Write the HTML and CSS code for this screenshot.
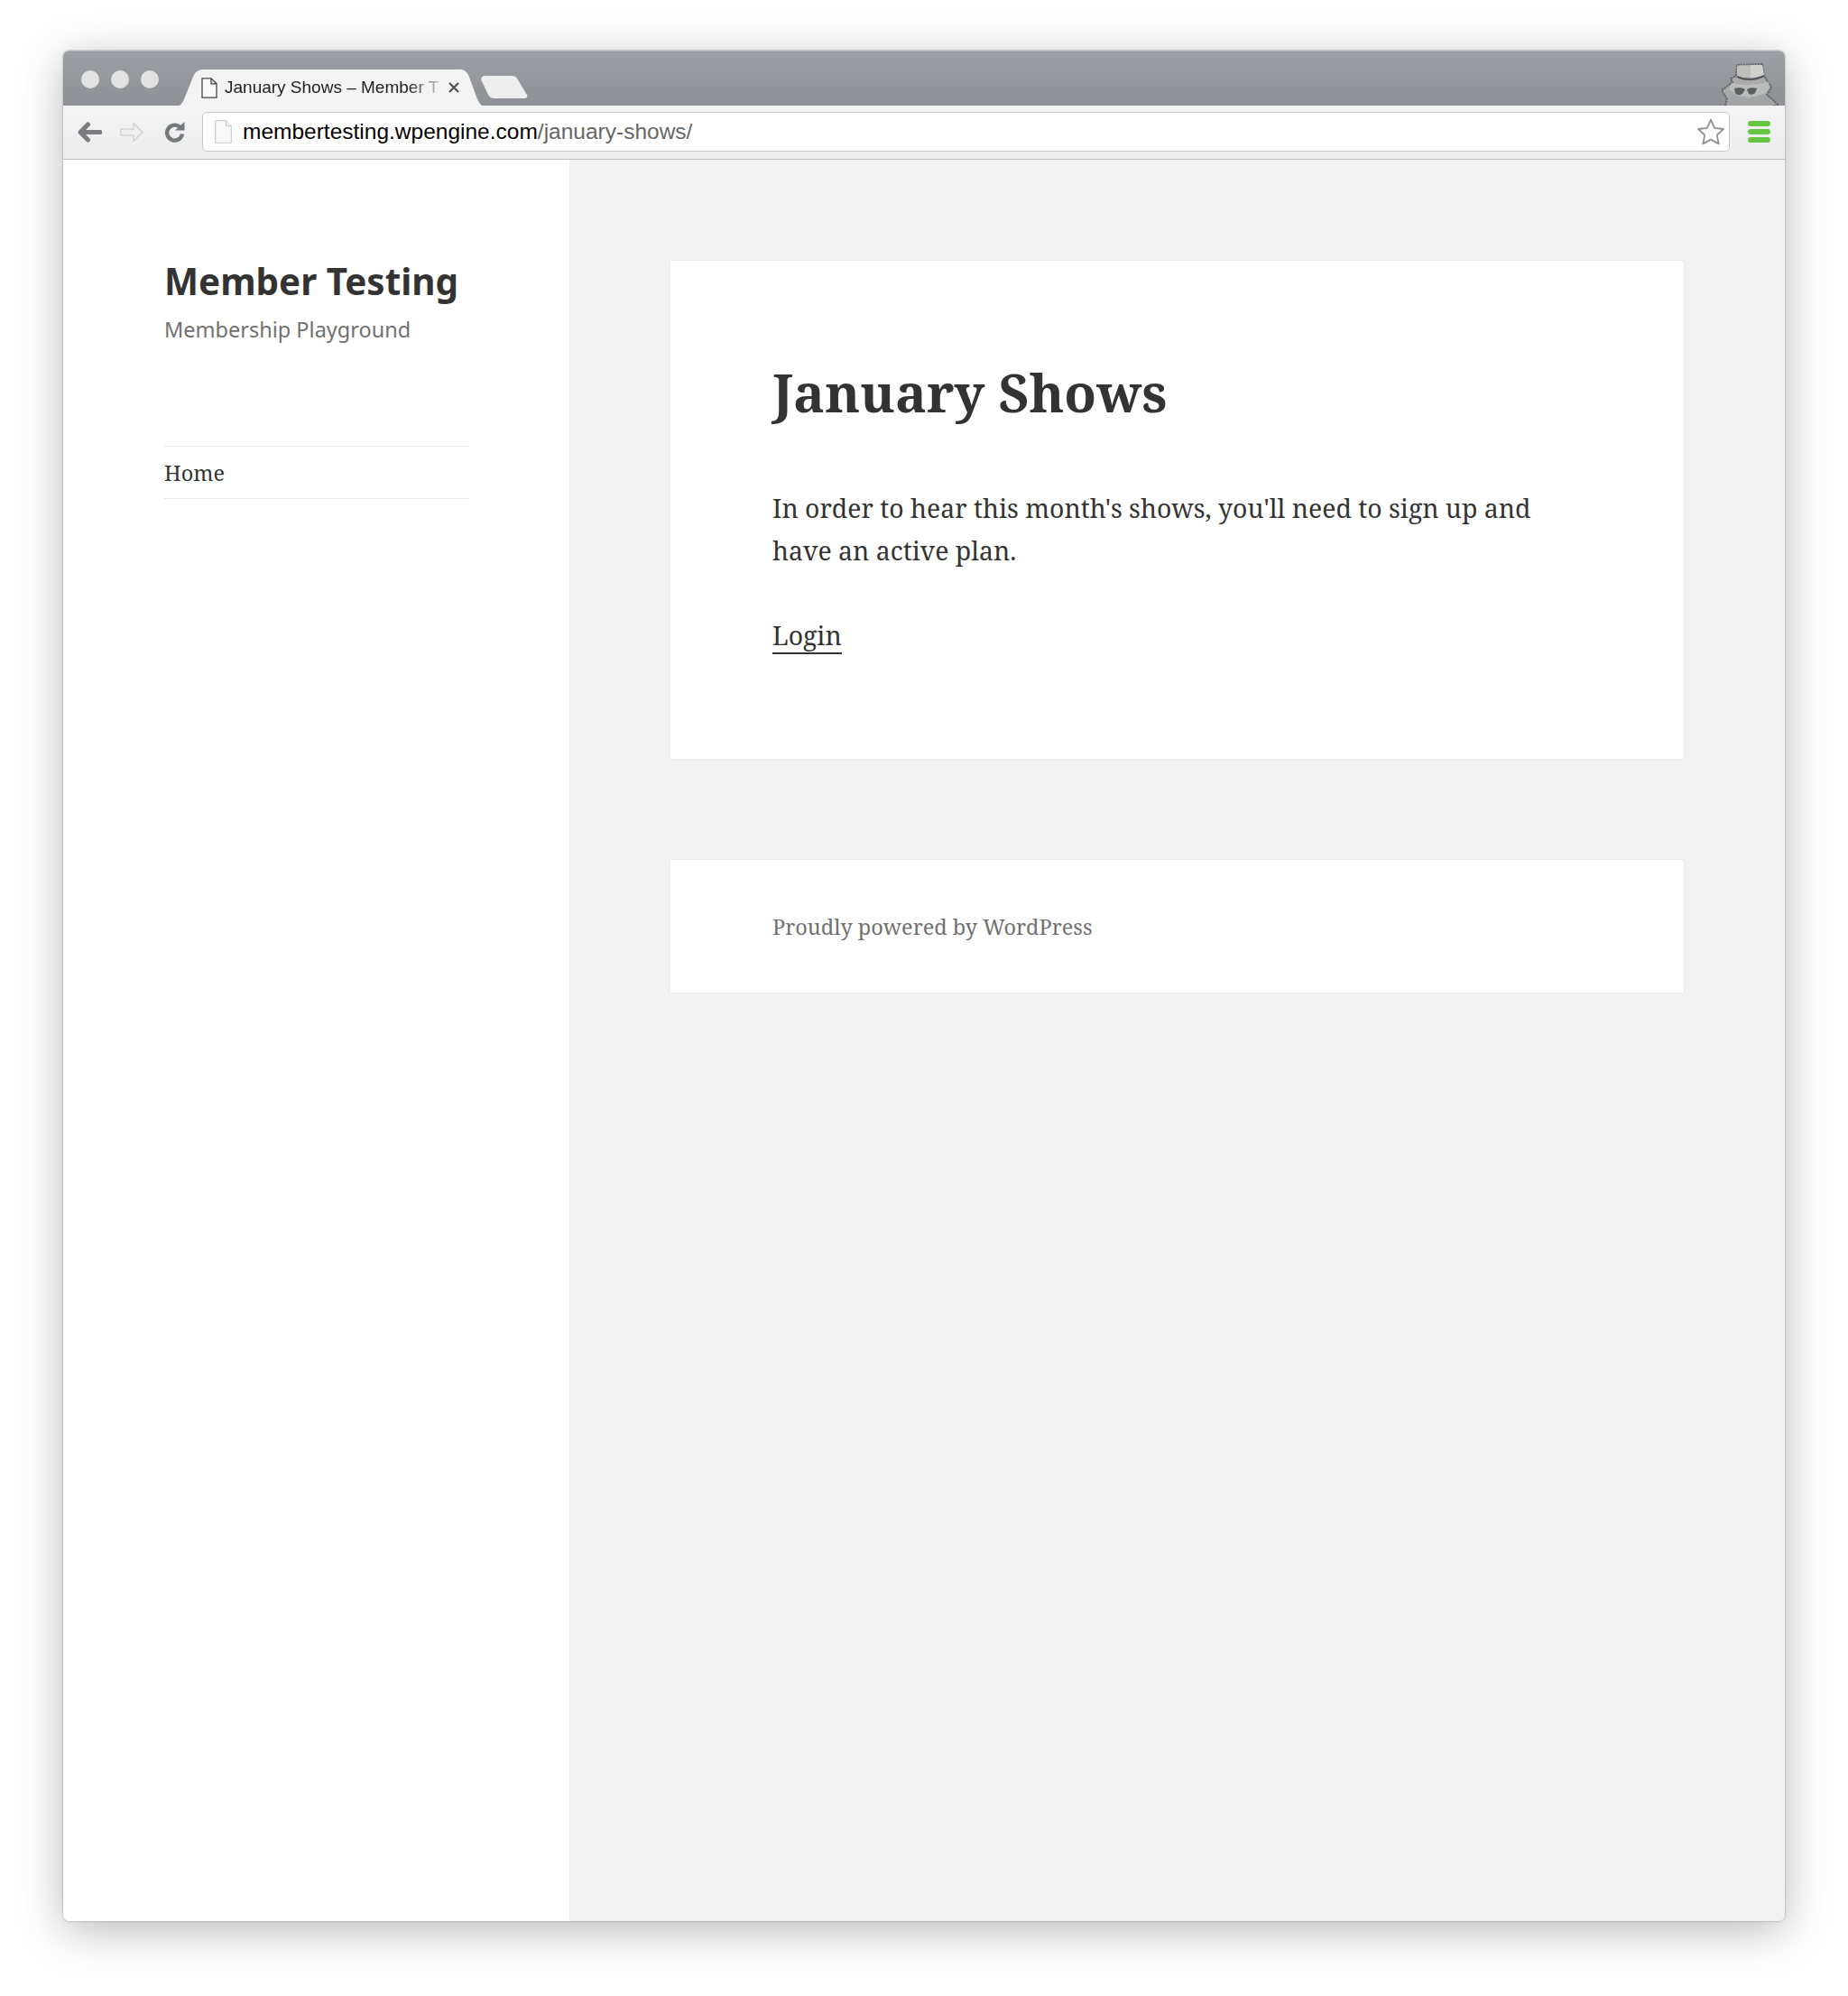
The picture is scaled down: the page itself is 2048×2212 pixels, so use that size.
FILE: index.html
```html
<!DOCTYPE html>
<html lang="en">
<head>
<meta charset="utf-8">
<title>January Shows – Member Testing</title>
<link rel="stylesheet" href="styles.css">
</head>
<body>
<div class="window">
  <header class="tabstrip">
    <div class="lights"><span class="light"></span><span class="light"></span><span class="light"></span></div>
    <div class="tab">
      <svg class="tab-shape" width="344" height="41" viewBox="0 0 344 41"><path d="M0 41c5 0 8-3 10-8L20 8c2-5 6-8 11-8h284c5 0 8 2 10 6l9 24c2 6 5 11 10 11z" fill="#f3f3f3"/></svg>
      <svg class="tab-page" width="18" height="23" viewBox="0 0 18 23"><path d="M1 .8h10l6 6v15.400H1zM11 .8v6h6" fill="#fafafa" stroke="#444" stroke-width="1.300"/></svg>
      <span class="tab-title">January Shows – Member T</span>
      <svg class="tab-close" width="14" height="14" viewBox="0 0 14 14"><path d="M2 2l10 10M12 2L2 12" stroke="#555" stroke-width="2.400"/></svg>
    </div>
    <svg class="newtab" width="52" height="25" viewBox="0 0 52 25"><path d="M5 0h29c3 0 5 1 6 3l11 18c1 2 0 4-3 4H15c-3 0-5-1-7-4L1 6C-1 3 1 0 5 0z" fill="#eeeeee"/></svg>
    <svg class="spy" width="80" height="57" viewBox="0 0 80 57">
      <path d="M12 57l2-7-6-10 12-9-2-4 6-3 1-12 28-1 2 13 5 8 3 5-5 8 6 5 7 7z" fill="#a9aaac" stroke="#66676b" stroke-width="2" stroke-dasharray="2.400 .8"/>
      <path d="M25 12.500l28-.5 2 12-30 3z" fill="#bebeb8"/>
      <path d="M40 12l13 0 2 12-15 3z" fill="#cfcfcd"/>
      <path d="M19 32c13 3 27 2 41-1l1 6-5 7-18 4-16-5-6-4z" fill="#bcbcba"/>
      <path d="M15 55l4-10 18 5 19-6 7 9 2 4H14z" fill="#a2a3a5"/>
      <path d="M25 25c8 4 20 4 30-1" fill="none" stroke="#55565a" stroke-width="2.400"/>
      <path d="M22 38c4-1 9-1 12 1l-3 5c-3 2-6 1-8-1zM36 39c3-2 8-2 11-1l-2 5c-2 2-5 2-7 1z" fill="#5c5d60"/>
    </svg>
  </header>
  <nav class="toolbar">
    <svg class="back" width="27" height="23" viewBox="0 0 27 23"><path d="M11.500 3L3 11.500l8.500 8.500M4 11.500h21" fill="none" stroke="#7c7d80" stroke-width="5" stroke-linecap="round" stroke-linejoin="round"/></svg>
    <svg class="forward" width="26" height="23" viewBox="0 0 26 23"><path d="M15 1.500l10 10-10 10v-6.500H1V8h14z" fill="#efefef" stroke="#d2d2d2" stroke-width="1.500" stroke-linejoin="round"/></svg>
    <svg class="reload" width="23" height="23" viewBox="0 0 23 23"><path d="M18 6.500a8.500 8.500 0 1 0 2 7" fill="none" stroke="#77787b" stroke-width="4.400"/><path d="M12 9.500L22.500 0v9.500z" fill="#77787b"/></svg>
    <div class="omnibox">
      <svg class="omni-page" width="19" height="26" viewBox="0 0 19 26"><path d="M.7.700h11.800l5.800 6v18.600H.7z" fill="#f8f8f8" stroke="#c6c6c6"/><path d="M12.500.7v6h5.800" fill="#ececec" stroke="#c6c6c6"/></svg>
      <span class="url"><span class="host">membertesting.wpengine.com</span>/january-shows/</span>
      <svg class="star" width="32" height="30" viewBox="0 0 32 30"><path d="M16 1.800l4.200 9 9.800 1.200-7.200 6.700 1.900 9.700L16 23.600l-8.700 4.800 1.900-9.700L2 12l9.800-1.200z" fill="#fff" stroke="#8f8f8f" stroke-width="1.800" stroke-linejoin="round"/></svg>
    </div>
    <div class="menu"><span class="menu-bar"></span><span class="menu-bar"></span><span class="menu-bar"></span></div>
  </nav>
  <div class="page">
    <aside class="sidebar">
      <h2 class="site-title">Member Testing</h2>
      <p class="site-desc">Membership Playground</p>
      <ul class="site-nav"><li class="site-nav-item">Home</li></ul>
    </aside>
    <main class="content">
      <article class="card card-main">
        <h1 class="entry-title">January Shows</h1>
        <p class="entry-text">In order to hear this month's shows, you'll need to sign up and have an active plan.</p>
        <p class="entry-text"><a class="entry-link" href="#">Login</a></p>
      </article>
      <footer class="card card-foot">Proudly powered by WordPress</footer>
    </main>
  </div>
</div>
</body>
</html>
```
FILE: styles.css
```css
* { box-sizing: border-box; }
html, body { margin: 0; height: 100%; background: #fff; }
body { padding: 56px 70px 83px; font-family: "Noto Serif", "DejaVu Serif", serif; }
.window {
  width: 1908px;
  height: 2073px;
  display: flex;
  flex-direction: column;
  border-radius: 7px;
  overflow: hidden;
  background: #fff;
  box-shadow: 0 0 2px rgba(0,0,0,.45), 0 10px 50px rgba(0,0,0,.28);
}
.tabstrip {
  height: 61px;
  flex: none;
  display: flex;
  position: relative;
  align-items: flex-start;
  background: linear-gradient(#9c9fa4, #8d9095);
  border-top: 1px solid #b4b6ba;
}
.lights { display: flex; gap: 13px; padding: 21px 0 0 20px; }
.light { width: 20px; height: 20px; border-radius: 50%; background: #e1e1e1; }
.tab {
  position: absolute;
  left: 124px;
  top: 20px;
  width: 344px;
  height: 41px;
  font: 19px/22px "Liberation Sans", Arial, sans-serif;
  color: #222;
}
.tab-shape { position: absolute; left: 0; top: 0; }
.tab-page { position: absolute; left: 29px; top: 9px; }
.tab-title {
  position: absolute;
  left: 55px;
  top: 9px;
  width: 241px;
  white-space: nowrap;
  -webkit-mask-image: linear-gradient(90deg, #000 84%, rgba(0,0,0,.15) 100%);
  mask-image: linear-gradient(90deg, #000 84%, rgba(0,0,0,.15) 100%);
}
.tab-close { position: absolute; left: 302px; top: 13px; }
.newtab { position: absolute; left: 463px; top: 27px; }
.spy { position: absolute; left: 1830px; top: 3px; }
.toolbar {
  height: 60px;
  flex: none;
  display: flex;
  align-items: center;
  padding: 0 0 1px 16px;
  background: linear-gradient(#f4f4f4, #ececec);
  border-bottom: 1px solid #bdbdbd;
}
.back { flex: none; }
.forward { flex: none; margin-left: 20px; }
.reload { flex: none; margin-left: 23px; }
.omnibox {
  flex: none;
  margin-left: 19px;
  width: 1693px;
  height: 44px;
  display: flex;
  align-items: center;
  position: relative;
  padding-left: 13px;
  background: #fff;
  border: 1px solid #c8c8c8;
  border-radius: 5px;
}
.omni-page { flex: none; }
.url {
  margin-left: 12px;
  font: 24.5px "Liberation Sans", Arial, sans-serif;
  color: #666;
  white-space: nowrap;
}
.host { color: #000; }
.star { position: absolute; right: 4px; top: 6px; }
.menu { flex: none; width: 25px; margin-left: 20px; display: flex; flex-direction: column; gap: 3px; }
.menu-bar { height: 6px; border-radius: 3px; background: #66c644; }
.page { flex: 1; display: flex; min-height: 0; }
.sidebar { width: 561px; flex: none; padding: 113px 112px 0; background: #fff; }
.site-title {
  margin: 0;
  font: 700 40.4px/44px "Noto Sans", sans-serif;
  color: #333;
  white-space: nowrap;
}
.site-desc {
  margin: 12px 0 0;
  font: 23.5px/38px "Noto Sans", sans-serif;
  color: #707070;
}
.site-nav { list-style: none; margin: 110px 0 0; padding: 0; border-top: 1px solid #eaeaea; border-bottom: 1px solid #eaeaea; }
.site-nav-item { height: 57px; font-size: 23.5px; line-height: 59px; color: #333; }
.content { flex: 1; padding: 112px; background: #f1f1f1; display: flex; flex-direction: column; gap: 112px; }
.card { background: #fff; box-shadow: 0 0 1px rgba(0,0,0,.15); padding: 0 112px 0 113px; }
.card-main { height: 552px; padding-top: 111px; }
.card-foot { height: 147px; padding-top: 55px; font-size: 23.5px; line-height: 38px; color: #707070; }
.entry-title { margin: 0; font-size: 58.4px; line-height: 70px; font-weight: 700; color: #333; }
.entry-text { margin: 70px 0 0; font-size: 28.4px; line-height: 47px; color: #333; }
.entry-text + .entry-text { margin-top: 47px; }
.entry-link { color: #333; text-decoration: none; border-bottom: 2px solid #333; }
```
